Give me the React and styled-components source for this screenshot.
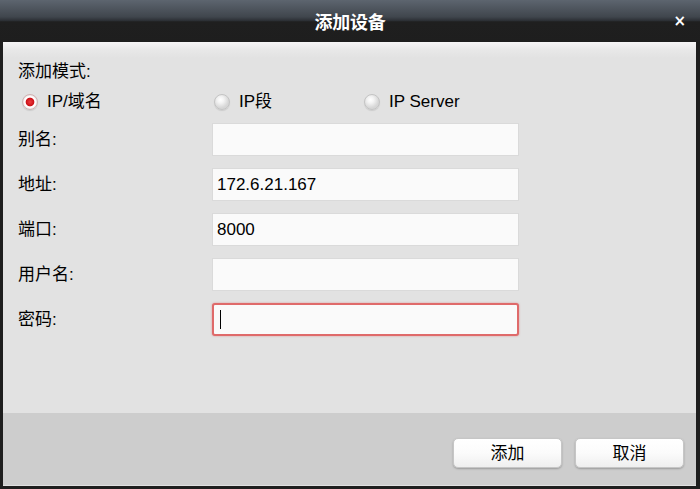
import React from 'react';
import styled, { createGlobalStyle } from 'styled-components';

const Global = createGlobalStyle`
  html, body {
    margin: 0;
    padding: 0;
    background: #1e1e1e;
  }
  body {
    font-family: "Liberation Sans", "Noto Sans CJK SC", Arial, sans-serif;
  }
`;

const Window = styled.div`
  width: 700px;
  height: 489px;
  display: flex;
  flex-direction: column;
  background: #1e1e1e;
  padding: 0 4px 3px 3px;
  box-sizing: border-box;
`;

const TitleBar = styled.div`
  height: 42px;
  flex-shrink: 0;
  margin: 0 -4px 0 -3px;
  display: grid;
  grid-template-columns: 1fr auto 1fr;
  align-items: center;
  background: linear-gradient(to bottom, #5d656f 0, #40464d 40%, #2c3035 49%, #1f1f1f 52%, #1e1e1e 100%);
`;

const Title = styled.div`
  grid-column: 2;
  color: #fff;
  font-size: 18px;
  font-weight: bold;
  font-family: "Noto Sans CJK SC", sans-serif;
  letter-spacing: -0.3px;
`;

const Close = styled.div`
  grid-column: 3;
  justify-self: end;
  padding-right: 14px;
  color: #fff;
  font-size: 15px;
  font-weight: bold;
  font-family: "DejaVu Sans", sans-serif;
  line-height: 1;
`;

const Panel = styled.div`
  flex: 1;
  display: flex;
  flex-direction: column;
`;

const Form = styled.div`
  flex: 1;
  padding: 20px 0 0 15px;
  background: linear-gradient(to bottom, #f6f5f6 0, #e8e8e8 8px, #e2e2e2 16px, #e2e2e2 100%);
  font-size: 17px;
  color: #000;
  font-family: "Liberation Sans", "Noto Sans CJK SC", sans-serif;
`;

const ModeLabel = styled.div`
  height: 20px;
  line-height: 20px;
`;

const RadioRow = styled.div`
  display: flex;
  height: 20px;
  margin-top: 10px;
  padding-left: 4px;
`;

const RadioOption = styled.label`
  width: ${p => p.$w}px;
  display: flex;
  align-items: center;
  gap: 9px;
  line-height: 20px;
`;

const RadioDot = styled.span`
  width: 16px;
  height: 16px;
  border-radius: 50%;
  box-sizing: border-box;
  flex-shrink: 0;
  border: 1px solid ${p => (p.$on ? '#cdb4b4' : '#c4c4c4')};
  background: ${p =>
    p.$on
      ? 'radial-gradient(circle at 50% 50%, #ee3a3e 0, #cc1218 3.8px, #fff 4.8px, #fff 5.4px, #ead6d6 7.5px)'
      : 'radial-gradient(circle at 40% 35%, #ffffff 0, #f4f4f4 3px, #d6d6d6 8px)'};
  box-shadow: 0 1px 1px rgba(0, 0, 0, 0.1);
`;

const Fields = styled.div`
  margin-top: 11px;
  display: flex;
  flex-direction: column;
  gap: 12px;
`;

const FieldRow = styled.div`
  display: grid;
  grid-template-columns: 194px 307px;
  align-items: center;
  height: 33px;
`;

const Label = styled.span`
  line-height: 20px;
`;

const Input = styled.div`
  height: 33px;
  box-sizing: border-box;
  background: #fafafa;
  border: ${p => (p.$focus ? '2px solid #df6a6a' : '1px solid #dadada')};
  border-radius: ${p => (p.$focus ? '3px' : '0')};
  box-shadow: ${p => (p.$focus ? '0 0 2px rgba(220, 80, 80, 0.55)' : 'none')};
  padding-left: ${p => (p.$focus ? '6px' : '4px')};
  display: flex;
  align-items: center;
  font-size: 17px;
  color: #000;
`;

const Caret = styled.span`
  width: 1px;
  height: 19px;
  background: #000;
`;

const Footer = styled.div`
  height: 73px;
  box-sizing: border-box;
  background: #cdcdcd;
  border-bottom: 1px solid #e0e0e0;
  display: flex;
  justify-content: flex-end;
  align-items: flex-start;
  gap: 13px;
  padding: 25px 12px 0 0;
`;

const Button = styled.button`
  width: 109px;
  height: 30px;
  box-sizing: border-box;
  border: 1px solid #c6c6c6;
  border-radius: 5px;
  background: linear-gradient(to bottom, #ffffff 0, #fbfbfb 50%, #efefef 100%);
  box-shadow: 0 1px 2px rgba(0, 0, 0, 0.25);
  font-size: 17px;
  line-height: 1;
  font-family: "Noto Sans CJK SC", sans-serif;
  color: #000;
  padding: 0 0 3px;
`;

const fields = [
  { label: '别名:', value: '' },
  { label: '地址:', value: '172.6.21.167' },
  { label: '端口:', value: '8000' },
  { label: '用户名:', value: '' },
  { label: '密码:', value: '', focus: true },
];

export default function App() {
  return (
    <>
      <Global />
      <Window>
        <TitleBar>
          <Title>添加设备</Title>
          <Close>×</Close>
        </TitleBar>
        <Panel>
          <Form>
            <ModeLabel>添加模式:</ModeLabel>
            <RadioRow>
              <RadioOption $w={192}>
                <RadioDot $on />
                IP/域名
              </RadioOption>
              <RadioOption $w={150}>
                <RadioDot />
                IP段
              </RadioOption>
              <RadioOption $w={150}>
                <RadioDot />
                IP Server
              </RadioOption>
            </RadioRow>
            <Fields>
              {fields.map(f => (
                <FieldRow key={f.label}>
                  <Label>{f.label}</Label>
                  <Input $focus={f.focus}>
                    {f.focus ? <Caret /> : f.value}
                  </Input>
                </FieldRow>
              ))}
            </Fields>
          </Form>
          <Footer>
            <Button>添加</Button>
            <Button>取消</Button>
          </Footer>
        </Panel>
      </Window>
    </>
  );
}
